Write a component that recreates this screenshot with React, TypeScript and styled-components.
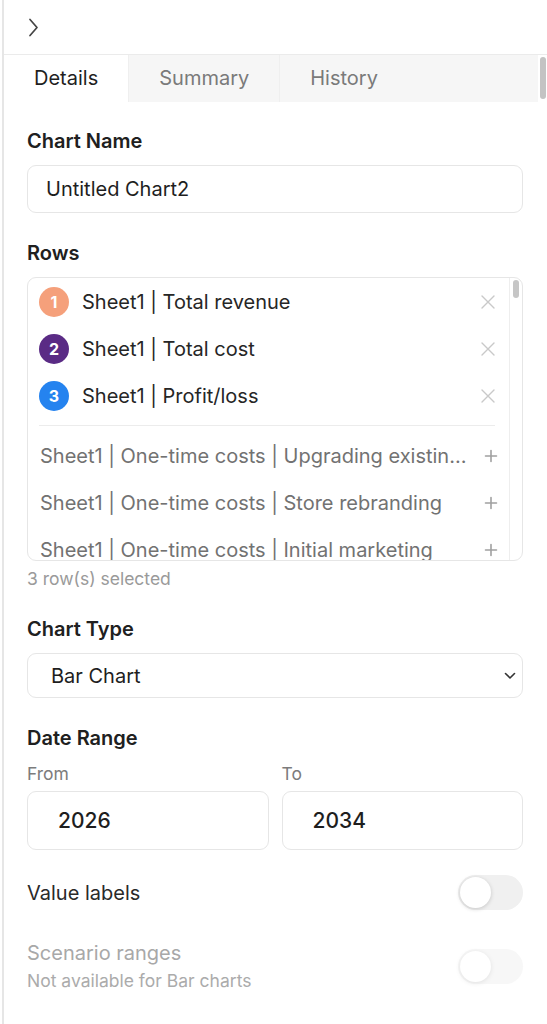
import React from "react";
import styled, { createGlobalStyle } from "styled-components";

const GlobalStyle = createGlobalStyle`
  html, body {
    margin: 0;
    padding: 0;
    background: #ffffff;
  }
  body {
    font-family: Inter, "Noto Sans", "Liberation Sans", sans-serif;
    color: #222222;
    -webkit-font-smoothing: antialiased;
  }
  * {
    box-sizing: border-box;
  }
`;

const Shell = styled.div`
  padding-left: 2px;
  width: 547px;
  height: 1024px;
  overflow: hidden;
`;

const Panel = styled.aside`
  position: relative;
  height: 100%;
  border-left: 2px solid #e6e6e6;
  background: #ffffff;
`;

const TopBar = styled.header`
  height: 55px;
  display: flex;
  align-items: center;
  padding-left: 23px;
  border-bottom: 1px solid #ebebeb;
  color: #444444;
`;

const Tabs = styled.nav`
  display: flex;
  height: 47px;
  margin-right: 9px;
  background: #f6f6f6;
`;

const Tab = styled.button<{ $active?: boolean }>`
  border: 0;
  padding: 0 30px 1px;
  font: inherit;
  font-size: 20px;
  color: ${(p) => (p.$active ? "#1f1f1f" : "#7a7a7a")};
  background: ${(p) => (p.$active ? "#ffffff" : "transparent")};
  cursor: pointer;
  & + & {
    border-left: 1px solid #efefef;
  }
`;

const ScrollThumb = styled.div`
  position: absolute;
  top: 57px;
  right: 1px;
  width: 6px;
  height: 42px;
  border-radius: 3px;
  background: #c3c3c3;
`;

const Body = styled.div`
  padding: 27px 24px 0 23px;
`;

const Label = styled.div`
  font-size: 20px;
  line-height: 24px;
  font-weight: 600;
  color: #202020;
`;

const Field = styled.div<{ $gap?: number }>`
  display: flex;
  flex-direction: column;
  gap: ${(p) => p.$gap ?? 12}px;
  margin-bottom: 28px;
`;

const TextInput = styled.input<{ $height?: number; $pad?: number; $bold?: boolean }>`
  width: 100%;
  height: ${(p) => p.$height ?? 48}px;
  padding: 0 ${(p) => p.$pad ?? 18}px;
  border: 1px solid #e6e6e6;
  border-radius: 9px;
  font: inherit;
  font-size: ${(p) => (p.$bold ? 21 : 20)}px;
  font-weight: ${(p) => (p.$bold ? 500 : 400)};
  color: #1e1e1e;
  background: #ffffff;
  outline: none;
`;

const RowsBox = styled.div`
  display: flex;
  height: 284px;
  border: 1px solid #e6e6e6;
  border-radius: 9px;
  overflow: hidden;
`;

const RowsList = styled.div`
  flex: 1;
  min-width: 0;
  padding: 0 14px 0 11px;
`;

const RowsTrack = styled.div`
  position: relative;
  width: 13px;
  border-left: 1px solid #eeeeee;
  &::after {
    content: "";
    position: absolute;
    top: 2px;
    left: 3px;
    width: 6px;
    height: 18px;
    border-radius: 3px;
    background: #c6c6c6;
  }
`;

const RowItem = styled.div<{ $picked?: boolean }>`
  display: flex;
  align-items: center;
  height: 47px;
  gap: 13px;
  padding-left: ${(p) => (p.$picked ? 0 : 1)}px;
  font-size: 20px;
  color: ${(p) => (p.$picked ? "#262626" : "#727272")};
`;

const RowText = styled.span`
  flex: 1;
  min-width: 0;
  white-space: nowrap;
  overflow: hidden;
  text-overflow: ellipsis;
`;

const Badge = styled.span<{ $color: string }>`
  flex: none;
  width: 30px;
  height: 30px;
  border-radius: 50%;
  display: flex;
  align-items: center;
  justify-content: center;
  background: ${(p) => p.$color};
  color: #ffffff;
  font-size: 16px;
  font-weight: 700;
`;

const RowAction = styled.span<{ $tone: string; $nudge?: number }>`
  flex: none;
  display: flex;
  margin-right: ${(p) => p.$nudge ?? 0}px;
  color: ${(p) => p.$tone};
`;

const Divider = styled.div`
  height: 1px;
  margin: 6px 0;
  background: #ececec;
`;

const Hint = styled.div<{ $tone?: string }>`
  font-size: 17.5px;
  line-height: 21px;
  color: ${(p) => p.$tone ?? "#9a9a9a"};
`;

const SelectBox = styled.div`
  display: flex;
  align-items: center;
  justify-content: space-between;
  height: 45px;
  padding: 0 6px 0 23px;
  border: 1px solid #e6e6e6;
  border-radius: 9px;
  font-size: 20px;
  color: #1e1e1e;
`;

const RangeGrid = styled.div`
  display: grid;
  grid-template-columns: 1fr 1fr;
  column-gap: 13px;
`;

const RangeCell = styled.div`
  display: flex;
  flex-direction: column;
  gap: 7px;
`;

const ToggleRow = styled.div<{ $top: number }>`
  display: flex;
  align-items: center;
  justify-content: space-between;
  margin-top: ${(p) => p.$top}px;
`;

const ToggleText = styled.div<{ $muted?: boolean }>`
  display: flex;
  flex-direction: column;
  gap: 5px;
  font-size: 20px;
  line-height: 24px;
  color: ${(p) => (p.$muted ? "#a8a8a8" : "#2a2a2a")};
`;

const Switch = styled.span<{ $disabled?: boolean }>`
  position: relative;
  width: 65px;
  height: 35px;
  border-radius: 18px;
  background: #f0f0f0;
  opacity: ${(p) => (p.$disabled ? 0.5 : 1)};
  &::after {
    content: "";
    position: absolute;
    top: 2px;
    left: 2px;
    width: 31px;
    height: 31px;
    border-radius: 50%;
    background: #ffffff;
    box-shadow: 0 1px 4px rgba(0, 0, 0, 0.18);
  }
`;

const Chevron = ({ dir }: { dir: "right" | "down" }) =>
  dir === "right" ? (
    <svg width="12" height="19" viewBox="0 0 12 19" fill="none">
      <path d="M3 1.5 L10 9.5 L3 17.5" stroke="currentColor" strokeWidth="1.7" strokeLinecap="round" strokeLinejoin="round" />
    </svg>
  ) : (
    <svg width="12" height="8" viewBox="0 0 12 8" fill="none">
      <path d="M1.5 1.5 L6 6 L10.5 1.5" stroke="#333" strokeWidth="1.6" strokeLinecap="round" strokeLinejoin="round" />
    </svg>
  );

const CrossIcon = () => (
  <svg width="14" height="14" viewBox="0 0 14 14" fill="none">
    <path d="M1 1 L13 13 M13 1 L1 13" stroke="currentColor" strokeWidth="1.4" strokeLinecap="round" />
  </svg>
);

const PlusIcon = () => (
  <svg width="14" height="14" viewBox="0 0 14 14" fill="none">
    <path d="M7 1.5 V12.5 M1.5 7 H12.5" stroke="currentColor" strokeWidth="1.6" strokeLinecap="round" />
  </svg>
);

const picked = [
  { n: 1, color: "#f5a07b", name: "Sheet1 | Total revenue" },
  { n: 2, color: "#5a2b85", name: "Sheet1 | Total cost" },
  { n: 3, color: "#2583ef", name: "Sheet1 | Profit/loss" },
];

const available = [
  "Sheet1 | One-time costs | Upgrading existing stores",
  "Sheet1 | One-time costs | Store rebranding",
  "Sheet1 | One-time costs | Initial marketing",
];

export default function App() {
  return (
    <>
      <GlobalStyle />
      <Shell>
        <Panel>
          <TopBar>
            <Chevron dir="right" />
          </TopBar>
          <Tabs>
            <Tab $active>Details</Tab>
            <Tab>Summary</Tab>
            <Tab>History</Tab>
          </Tabs>
          <ScrollThumb />

          <Body>
            <Field>
              <Label>Chart Name</Label>
              <TextInput defaultValue="Untitled Chart2" />
            </Field>

            <Field $gap={0} style={{ marginBottom: 28 }}>
              <Label style={{ marginBottom: 12 }}>Rows</Label>
              <RowsBox>
                <RowsList>
                  {picked.map((r) => (
                    <RowItem key={r.n} $picked>
                      <Badge $color={r.color}>{r.n}</Badge>
                      <RowText>{r.name}</RowText>
                      <RowAction $tone="#c9c9c9">
                        <CrossIcon />
                      </RowAction>
                    </RowItem>
                  ))}
                  <Divider />
                  {available.map((name) => (
                    <RowItem key={name}>
                      <RowText>{name}</RowText>
                      <RowAction $tone="#a0a0a0" $nudge={-3}>
                        <PlusIcon />
                      </RowAction>
                    </RowItem>
                  ))}
                </RowsList>
                <RowsTrack />
              </RowsBox>
              <Hint style={{ marginTop: 7 }}>3 row(s) selected</Hint>
            </Field>

            <Field>
              <Label>Chart Type</Label>
              <SelectBox>
                <span>Bar Chart</span>
                <Chevron dir="down" />
              </SelectBox>
            </Field>

            <Field $gap={13} style={{ marginBottom: 0 }}>
              <Label>Date Range</Label>
              <RangeGrid>
                <RangeCell>
                  <Hint $tone="#7c7c7c">From</Hint>
                  <TextInput $height={59} $pad={30} $bold defaultValue="2026" />
                </RangeCell>
                <RangeCell>
                  <Hint $tone="#7c7c7c">To</Hint>
                  <TextInput $height={59} $pad={30} $bold defaultValue="2034" />
                </RangeCell>
              </RangeGrid>
            </Field>

            <ToggleRow $top={25}>
              <ToggleText>Value labels</ToggleText>
              <Switch />
            </ToggleRow>

            <ToggleRow $top={31}>
              <ToggleText $muted>
                <span>Scenario ranges</span>
                <Hint $tone="#ababab">Not available for Bar charts</Hint>
              </ToggleText>
              <Switch $disabled />
            </ToggleRow>
          </Body>
        </Panel>
      </Shell>
    </>
  );
}
